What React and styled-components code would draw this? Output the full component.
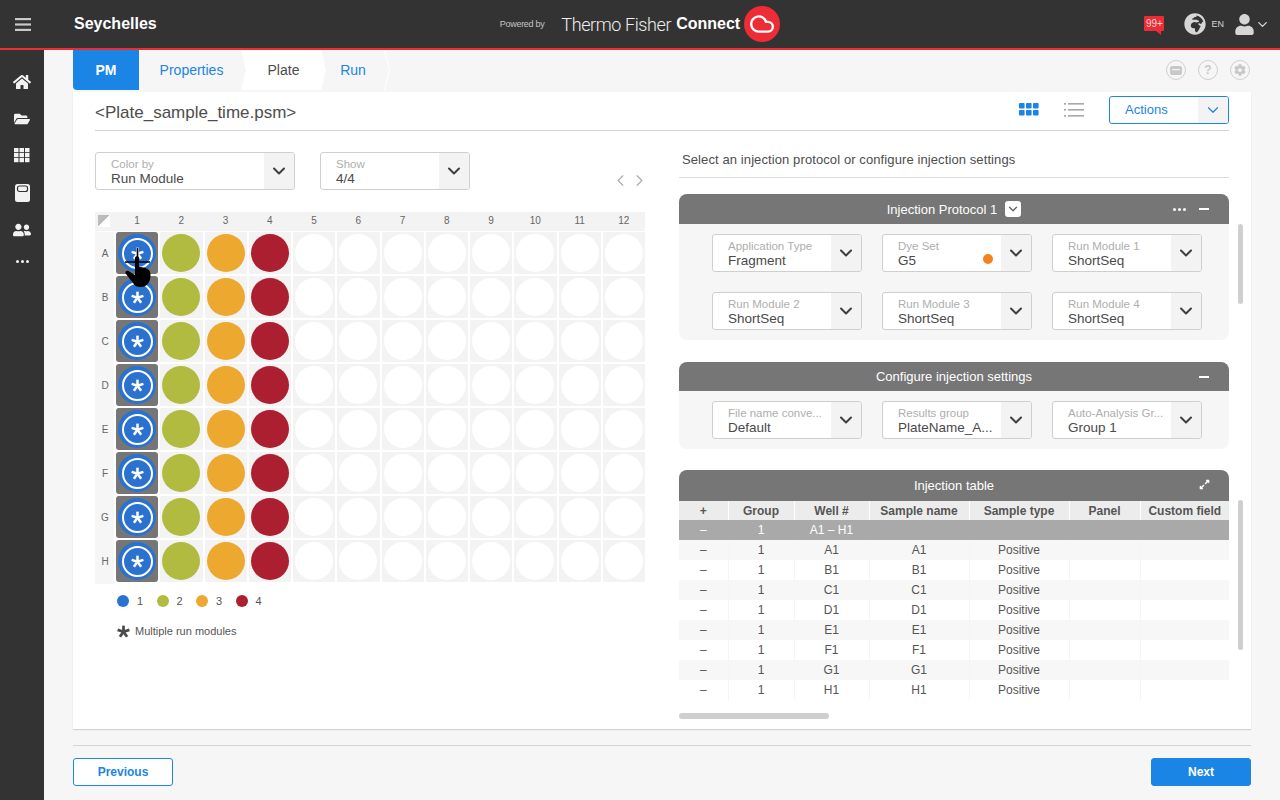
import styled, { createGlobalStyle } from 'styled-components';
import { ChevronDown, ChevronLeft, ChevronRight, Cloud } from 'lucide-react';
import { FaHome, FaFolderOpen, FaUserFriends, FaGlobeAfrica, FaUser, FaCog, FaExpandAlt } from 'react-icons/fa';

const GlobalStyle = createGlobalStyle`
  html, body { margin: 0; padding: 0; }
  body {
    font-family: "Liberation Sans", Arial, sans-serif;
    color: #4a4a4a;
    background: #f6f6f7;
  }
  * { box-sizing: border-box; }
`;

const BLUE = '#1b85e5';

// --- layout ---
const Page = styled.div`
  width: 1280px;
  height: 800px;
  display: flex;
  flex-direction: column;
  overflow: hidden;
`;

const TopBar = styled.header`
  height: 50px;
  flex: none;
  display: grid;
  grid-template-columns: 1fr auto 1fr;
  align-items: center;
  background: #333333;
  border-bottom: 2px solid #ee2c35;
  color: #fff;
`;

const BarLeft = styled.div`
  display: flex;
  align-items: center;
`;

const Burger = styled.div`
  width: 44px;
  margin-right: 30px;
  display: flex;
  justify-content: center;
  color: #c9c9c9;
  margin-left: 1px;
  margin-right: 29px;
`;

const Brand = styled.div`
  font-size: 16px;
  font-weight: 700;
`;

const Logo = styled.div`
  display: flex;
  align-items: center;
`;

const PoweredBy = styled.span`
  font-size: 9px;
  letter-spacing: -0.3px;
  color: #c4c4c4;
  margin-right: 17px;
`;

const LogoName = styled.span`
  font-family: Roboto, sans-serif;
  font-weight: 300;
  font-size: 18px;
  letter-spacing: -0.4px;
  color: #eeeeee;
  margin-right: 5px;
`;

const LogoBold = styled.span`
  font-size: 16px;
  font-weight: 700;
  color: #fff;
  margin-right: 4px;
`;

const CloudBadge = styled.div`
  width: 36px;
  height: 36px;
  border-radius: 50%;
  background: #ee2c35;
  display: flex;
  align-items: center;
  justify-content: center;
`;

const BarRight = styled.div`
  display: flex;
  align-items: center;
  justify-content: flex-end;
  padding-right: 10px;
  color: #d6d6d6;
`;

const AlertBadge = styled.div`
  position: relative;
  width: 20px;
  height: 15px;
  margin-right: 20px;
  margin-top: -2px;
  border-radius: 1px;
  background: #ee2c35;
  color: #f5d5d5;
  font-size: 10px;
  line-height: 15px;
  text-align: center;

  &::after {
    content: '';
    position: absolute;
    right: 3px;
    bottom: -4px;
    border-top: 4px solid #ee2c35;
    border-left: 5px solid transparent;
  }
`;

const Lang = styled.span`
  font-size: 9px;
  margin: 0 10px 0 5px;
`;

const Body = styled.div`
  flex: 1;
  display: flex;
  min-height: 0;
`;

const SideNav = styled.nav`
  width: 44px;
  flex: none;
  padding-top: 13px;
  background: #333333;
  color: #f2f2f2;
`;

const NavItem = styled.div`
  height: 37px;
  display: flex;
  align-items: center;
  justify-content: center;

  &:last-child {
    margin-top: -5px;
  }
`;

const Main = styled.main`
  flex: 1;
  display: flex;
  flex-direction: column;
  padding: 0 29px 14px;
  min-width: 0;
`;

// --- tabs ---
const TabBar = styled.div`
  height: 40px;
  flex: none;
  display: flex;
  justify-content: space-between;
  align-items: center;
  margin-bottom: 2px;
`;

const Tabs = styled.div`
  display: flex;
  height: 100%;
`;

const Tab = styled.div`
  height: 100%;
  width: ${(p) => p.$width}px;
  margin-left: ${(p) => (p.$active ? -3 : 0)}px;
  margin-right: ${(p) => (p.$active ? -4 : 0)}px;
  display: flex;
  align-items: center;
  justify-content: center;
  font-size: 14px;
  color: ${BLUE};
  ${(p) => p.$first && `background: ${BLUE}; color: #fff; font-weight: 700; border-bottom-left-radius: 4px;`}
  ${(p) =>
    p.$active &&
    `background: #fff; color: #4d4d4d;
     clip-path: polygon(0 0, calc(100% - 5px) 0, 100% 50%, calc(100% - 5px) 100%, 0 100%, 5px 50%);`}
`;

const TabEnd = styled.div`
  width: 6px;
  height: 100%;
  background: #fff;
  clip-path: polygon(0 0, 1px 0, 6px 50%, 1px 100%, 0 100%, 5px 50%);
`;

const ToolIcons = styled.div`
  display: flex;
  gap: 12px;
  margin-right: 1px;
`;

const ToolIcon = styled.div`
  width: 20px;
  height: 20px;
  border: 1.5px solid #cfcfcf;
  border-radius: 50%;
  display: flex;
  align-items: center;
  justify-content: center;
  color: #c8c8c8;
  font-size: 12px;
  font-weight: 700;
`;

// --- card ---
const Card = styled.section`
  flex: 1;
  min-height: 0;
  background: #fff;
  padding: 0 22px;
  box-shadow: 0 1px 1px rgba(0, 0, 0, 0.14);
`;

const TitleRow = styled.div`
  height: 39px;
  display: flex;
  align-items: center;
  justify-content: flex-end;
  gap: 25px;
  border-bottom: 1px solid #d4d4d4;
  padding-bottom: 3px;
`;

const FileName = styled.h1`
  margin: 0 auto 0 0;
  font-size: 17px;
  font-weight: 400;
  color: #4d4d4d;
  padding-top: 6px;
`;

const ViewIcon = styled.div`
  display: flex;
`;

const ActionsButton = styled.div`
  width: 120px;
  height: 28px;
  margin-left: 0;
  border: 1px solid ${BLUE};
  border-radius: 3px;
  display: flex;
  align-items: stretch;
  color: ${BLUE};
  font-size: 13px;
  overflow: hidden;
`;

const ActionsLabel = styled.span`
  flex: 1;
  line-height: 26px;
  padding-left: 15px;
`;

const ActionsCaret = styled.span`
  width: 30px;
  background: #f3f3f4;
  display: flex;
  align-items: center;
  justify-content: center;
`;

const Columns = styled.div`
  display: flex;
  justify-content: space-between;
`;

const LeftColumn = styled.div`
  width: 550px;
  padding-top: 21px;
`;

const RightColumn = styled.div`
  position: relative;
  width: 550px;
`;

// --- select ---
const SelectBox = styled.div`
  width: ${(p) => p.$width}px;
  height: 38px;
  flex: none;
  display: flex;
  position: relative;
  background: #fff;
  border: 1px solid #cfcfcf;
  border-radius: 3px;
  overflow: hidden;
`;

const SelectText = styled.div`
  flex: 1;
  min-width: 0;
  padding: 5px 0 0 15px;
`;

const SelectLabel = styled.div`
  font-size: 11.5px;
  line-height: 13px;
  color: #aeaeae;
  white-space: nowrap;
`;

const SelectValue = styled.div`
  font-size: 13.5px;
  line-height: 15px;
  color: #4a4a4a;
  white-space: nowrap;
`;

const SelectCaret = styled.div`
  width: 30px;
  flex: none;
  background: #f3f3f4;
  display: flex;
  align-items: center;
  justify-content: center;
  color: #3f3f3f;
`;

const SelectDot = styled.span`
  position: absolute;
  right: 38px;
  top: 19px;
  width: 10px;
  height: 10px;
  border-radius: 50%;
  background: #f58220;
`;

const Select = ({ label, value, width = 150, dot }) => (
  <SelectBox $width={width}>
    <SelectText>
      <SelectLabel>{label}</SelectLabel>
      <SelectValue>{value}</SelectValue>
    </SelectText>
    {dot && <SelectDot />}
    <SelectCaret>
      <ChevronDown size={20} strokeWidth={2.4} />
    </SelectCaret>
  </SelectBox>
);

// --- plate ---
const PlateControls = styled.div`
  display: flex;
  gap: 25px;
  height: 38px;
  margin-bottom: 22px;
`;

const Pager = styled.div`
  display: flex;
  margin-left: auto;
  margin-right: -4px;
  padding-top: 19px;
  gap: 0;
  color: #a9a9a9;
`;

const Plate = styled.div`
  position: relative;
  display: flex;
  flex-direction: column;
  gap: 2px;
`;

const PlateHead = styled.div`
  display: grid;
  grid-template-columns: 19px repeat(12, 1fr);
  column-gap: 2px;
  height: 19px;
  margin-bottom: -1px;
  background: #f3f3f3;
  font-size: 10px;
  line-height: 18px;
  text-align: center;
  color: #666;
`;

const CornerMark = styled.div`
  margin: 3px 0 0 3px;
  width: 12px;
  height: 12px;
  background: linear-gradient(135deg, #bbbbbb 50%, #fff 50%);
`;

const PlateRow = styled.div`
  display: grid;
  grid-template-columns: 19px repeat(12, 1fr);
  column-gap: 2px;
  height: 42px;
`;

const RowLabel = styled.div`
  background: #f6f6f6;
  margin-bottom: -2px;
  font-size: 10px;
  line-height: 44px;
  padding-left: 1px;
  text-align: center;
  color: #666;
`;

const Well = styled.div`
  background: ${(p) => (p.$selected ? '#767676' : '#f3f3f3')};
  border-radius: ${(p) => (p.$selected ? '3px' : '1px')};
  display: flex;
  align-items: center;
  justify-content: center;
`;

const Spot = styled.div`
  width: 38px;
  height: 38px;
  border-radius: 50%;
  background: ${(p) => p.$color};
  display: flex;
  align-items: center;
  justify-content: center;
`;

const SpotRing = styled.div`
  width: 31px;
  height: 31px;
  border: 2px solid #fff;
  border-radius: 50%;
  display: flex;
  align-items: center;
  justify-content: center;
`;

const TouchCursor = styled.svg`
  position: absolute;
  left: 29px;
  top: 36px;
`;

const Legend = styled.div`
  display: flex;
  align-items: center;
  margin: 12px 0 0 22px;
  height: 14px;
  font-size: 11px;
  color: #555;
`;

const LegendItem = styled.div`
  width: 39.5px;
  display: flex;
  align-items: center;
  gap: 8px;
`;

const LegendDot = styled.span`
  width: 12px;
  height: 12px;
  border-radius: 50%;
  background: ${(p) => p.$color};
`;

const Note = styled.div`
  display: flex;
  align-items: center;
  gap: 5px;
  margin: 16px 0 0 22px;
  height: 14px;
  font-size: 11px;
  color: #555;
`;

// --- right side ---
const RightTitle = styled.div`
  height: 47px;
  margin-bottom: 16px;
  padding: 21px 0 0 3px;
  border-bottom: 1px solid #dcdcdc;
  font-size: 13px;
  line-height: 16px;
  letter-spacing: 0.1px;
  color: #4d4d4d;
`;

const Panel = styled.div`
  background: #f6f6f7;
  border-radius: 8px;
  margin-bottom: ${(p) => p.$gap}px;
  overflow: hidden;
`;

const PanelHead = styled.div`
  height: ${(p) => p.$height || 30}px;
  display: grid;
  grid-template-columns: 1fr auto 1fr;
  align-items: center;
  background: #767676;
  color: #fff;
  font-size: 13px;
`;

const PanelTitle = styled.div`
  display: flex;
  align-items: center;
  gap: 8px;
`;

const TitleCaret = styled.span`
  width: 16px;
  height: 16px;
  border-radius: 3px;
  background: #fff;
  color: #666;
  display: flex;
  align-items: center;
  justify-content: center;
`;

const PanelActions = styled.div`
  grid-column: 3;
  display: flex;
  align-items: center;
  justify-content: flex-end;
  gap: 13px;
  padding-right: 20px;
`;

const DashIcon = styled.span`
  width: 10px;
  height: 2px;
  background: #fff;
`;

const MoreDots = styled.span`
  display: flex;
  gap: 2px;

  i {
    width: 3px;
    height: 3px;
    border-radius: 50%;
    background: ${(p) => p.$color || '#fff'};
  }
`;

const SelectGrid = styled.div`
  display: grid;
  grid-template-columns: repeat(3, 150px);
  gap: 20px;
  row-gap: 20px;
  padding: 10px 27px 10px 33px;
`;

const TableHead = styled.div`
  height: 31px;
  position: relative;
  display: flex;
  align-items: center;
  justify-content: center;
  padding-right: 0;
  background: #767676;
  color: #fff;
  font-size: 13px;
  border-radius: 8px 8px 0 0;
`;

const ExpandIcon = styled.span`
  position: absolute;
  right: 19px;
  top: 9px;
  display: flex;
`;

const Table = styled.table`
  width: 550px;
  table-layout: fixed;
  border-collapse: collapse;
  font-size: 12px;
  color: #555;
  text-align: center;

  th {
    height: 19px;
    padding: 0;
    background: #ececec;
    border-right: 1px solid #fff;
    font-weight: 700;
    color: #555;
  }
  th:last-child,
  td:last-child {
    border-right: 0;
  }
  td {
    height: 20px;
    padding: 0;
    border-right: 1px solid #f5f5f5;
  }
  tbody tr:nth-child(even) td {
    background: #f7f7f7;
  }
  tbody tr:nth-child(odd) td {
    background: #fff;
  }
  tbody tr:first-child td {
    background: #a9a9a9;
    color: #fff;
    border-right-color: #a9a9a9;
  }
`;

const ScrollThumb = styled.div`
  position: absolute;
  right: -14px;
  top: ${(p) => p.$top}px;
  width: 5px;
  height: ${(p) => p.$length}px;
  border-radius: 3px;
  background: #cfcfcf;
`;

const HScrollThumb = styled.div`
  width: 150px;
  height: 6px;
  margin-top: 13px;
  border-radius: 3px;
  background: #cfcfcf;
`;

// --- footer ---
const Footer = styled.footer`
  flex: none;
  margin-top: 16px;
  padding-top: 12px;
  border-top: 1px solid #d4d4d4;
  display: flex;
  justify-content: space-between;
`;

const FooterButton = styled.button`
  width: 100px;
  height: 28px;
  border: 1px solid ${BLUE};
  border-radius: 3px;
  background: ${(p) => (p.$primary ? BLUE : '#fff')};
  color: ${(p) => (p.$primary ? '#fff' : BLUE)};
  font: 700 12px "Liberation Sans", Arial, sans-serif;
`;

// --- drawings ---
const GridGlyph = () => (
  <svg width="16" height="15" viewBox="0 0 16 15" fill="currentColor">
    {[0, 5.5, 11].flatMap((x) =>
      [0, 5, 10].map((y) => <rect key={`${x}-${y}`} x={x} y={y} width="4.5" height="4.2" />)
    )}
  </svg>
);

const InstrumentGlyph = () => (
  <svg width="15" height="18" viewBox="0 0 15 18">
    <rect width="15" height="18" rx="2.5" fill="currentColor" />
    <rect x="2.5" y="2" width="10" height="5.5" rx="2" fill="none" stroke="#333" strokeWidth="1.2" />
  </svg>
);

const MenuGlyph = () => (
  <svg width="16" height="13" viewBox="0 0 16 13" fill="currentColor">
    <rect width="16" height="2.2" y="0" />
    <rect width="16" height="2.2" y="5.4" />
    <rect width="16" height="2.2" y="10.8" />
  </svg>
);

const TilesGlyph = () => (
  <svg width="20" height="13" viewBox="0 0 20 13" fill={BLUE}>
    {[0, 7, 14].flatMap((x) =>
      [0, 7].map((y) => <rect key={`${x}-${y}`} x={x} y={y} width="5.6" height="5.6" rx="0.8" />)
    )}
  </svg>
);

const ListGlyph = () => (
  <svg width="20" height="14" viewBox="0 0 20 14" fill="#a8a8a8">
    {[0, 6, 12].map((y) => (
      <g key={y}>
        <rect x="0" y={y} width="2" height="1.6" />
        <rect x="4" y={y} width="16" height="1.6" />
      </g>
    ))}
  </svg>
);

const StarGlyph = ({ size = 13, color = '#fff', weight = 2.6 }) => (
  <svg width={size} height={size} viewBox="0 0 20 20" stroke={color} strokeWidth={weight * 1.5} strokeLinecap="butt">
    {[0, 72, 144, 216, 288].map((a) => (
      <line key={a} x1="10" y1="10.5" x2="10" y2="1" transform={`rotate(${a} 10 10.5)`} />
    ))}
  </svg>
);

const TrayGlyph = () => (
  <svg width="12" height="9" viewBox="0 0 12 9" fill="#c8c8c8">
    <rect width="12" height="9" rx="2" />
    <rect x="2" y="3" width="8" height="1.2" fill="#f6f6f7" />
  </svg>
);

// --- data ---
const WELL_COLORS = ['#2b72d0', '#b1bb3f', '#eca82f', '#ac1f31'];
const ROWS = ['A', 'B', 'C', 'D', 'E', 'F', 'G', 'H'];
const COLS = [1, 2, 3, 4, 5, 6, 7, 8, 9, 10, 11, 12];
const COL_WIDTHS = [49, 66, 75, 100, 100, 71, 89];
const TABLE_HEADERS = ['+', 'Group', 'Well #', 'Sample name', 'Sample type', 'Panel', 'Custom field'];

const PROTOCOL_FIELDS = [
  { label: 'Application Type', value: 'Fragment' },
  { label: 'Dye Set', value: 'G5', dot: true },
  { label: 'Run Module 1', value: 'ShortSeq' },
  { label: 'Run Module 2', value: 'ShortSeq' },
  { label: 'Run Module 3', value: 'ShortSeq' },
  { label: 'Run Module 4', value: 'ShortSeq' },
];

const SETTING_FIELDS = [
  { label: 'File name conve...', value: 'Default' },
  { label: 'Results group', value: 'PlateName_A...' },
  { label: 'Auto-Analysis Gr...', value: 'Group 1' },
];

const WellCell = ({ col }) => {
  const color = WELL_COLORS[col - 1];
  if (col === 1) {
    return (
      <Well $selected>
        <Spot $color={color}>
          <SpotRing>
            <StarGlyph size={13} />
          </SpotRing>
        </Spot>
      </Well>
    );
  }
  return (
    <Well>
      <Spot $color={color || '#fff'} />
    </Well>
  );
};

export default function App() {
  return (
    <Page>
      <GlobalStyle />
      <TopBar>
        <BarLeft>
          <Burger>
            <MenuGlyph />
          </Burger>
          <Brand>Seychelles</Brand>
        </BarLeft>
        <Logo>
          <PoweredBy>Powered by</PoweredBy>
          <LogoName>Thermo Fisher</LogoName>
          <LogoBold>Connect</LogoBold>
          <CloudBadge>
            <Cloud size={26} color="#fff" strokeWidth={2.2} />
          </CloudBadge>
        </Logo>
        <BarRight>
          <AlertBadge>99+</AlertBadge>
          <FaGlobeAfrica size={22} />
          <Lang>EN</Lang>
          <FaUser size={21} />
          <ChevronDown size={15} strokeWidth={2.2} />
        </BarRight>
      </TopBar>

      <Body>
        <SideNav>
          <NavItem><FaHome size={18} /></NavItem>
          <NavItem><FaFolderOpen size={16} /></NavItem>
          <NavItem><GridGlyph /></NavItem>
          <NavItem><InstrumentGlyph /></NavItem>
          <NavItem><FaUserFriends size={18} /></NavItem>
          <NavItem>
            <MoreDots $color="#f2f2f2"><i /><i /><i /></MoreDots>
          </NavItem>
        </SideNav>

        <Main>
          <TabBar>
            <Tabs>
              <Tab $first $width={66}>PM</Tab>
              <Tab $width={105}>Properties</Tab>
              <Tab $active $width={85}>Plate</Tab>
              <Tab $width={62}>Run</Tab>
              <TabEnd />
            </Tabs>
            <ToolIcons>
              <ToolIcon><TrayGlyph /></ToolIcon>
              <ToolIcon>?</ToolIcon>
              <ToolIcon><FaCog size={12} /></ToolIcon>
            </ToolIcons>
          </TabBar>

          <Card>
            <TitleRow>
              <FileName>&lt;Plate_sample_time.psm&gt;</FileName>
              <ViewIcon><TilesGlyph /></ViewIcon>
              <ViewIcon><ListGlyph /></ViewIcon>
              <ActionsButton>
                <ActionsLabel>Actions</ActionsLabel>
                <ActionsCaret><ChevronDown size={18} strokeWidth={1.6} /></ActionsCaret>
              </ActionsButton>
            </TitleRow>

            <Columns>
              <LeftColumn>
                <PlateControls>
                  <Select label="Color by" value="Run Module" width={200} />
                  <Select label="Show" value="4/4" />
                  <Pager>
                    <ChevronLeft size={19} strokeWidth={1.4} />
                    <ChevronRight size={19} strokeWidth={1.4} />
                  </Pager>
                </PlateControls>

                <Plate>
                  <PlateHead>
                    <CornerMark />
                    {COLS.map((c) => <span key={c}>{c}</span>)}
                  </PlateHead>
                  {ROWS.map((r) => (
                    <PlateRow key={r}>
                      <RowLabel>{r}</RowLabel>
                      {COLS.map((c) => <WellCell key={c} col={c} />)}
                    </PlateRow>
                  ))}
                  <TouchCursor width="28" height="42" viewBox="0 0 28 42">
                    <path d="M1 14H26M13.5 0V12" stroke="#000" strokeWidth="1.6" fill="none" />
                    <path
                      fill="#000"
                      d="M11 10c0-2.2 4-2.2 4 0v9c4 0 8 1 10 3 2 2 2 8 0 12-2 4-5 5-9 5-3 0-5-1-7-4l-7-9c-1.500-2 .5-4 2.500-3l6.500 4z"
                    />
                  </TouchCursor>
                </Plate>

                <Legend>
                  {WELL_COLORS.map((color, i) => (
                    <LegendItem key={color}>
                      <LegendDot $color={color} />
                      {i + 1}
                    </LegendItem>
                  ))}
                </Legend>
                <Note>
                  <StarGlyph size={13} color="#4a4a4a" weight={2.8} />
                  Multiple run modules
                </Note>
              </LeftColumn>

              <RightColumn>
                <RightTitle>Select an injection protocol or configure injection settings</RightTitle>

                <Panel $gap={22}>
                  <PanelHead>
                    <span />
                    <PanelTitle>
                      Injection Protocol 1
                      <TitleCaret><ChevronDown size={14} strokeWidth={2.4} /></TitleCaret>
                    </PanelTitle>
                    <PanelActions>
                      <MoreDots><i /><i /><i /></MoreDots>
                      <DashIcon />
                    </PanelActions>
                  </PanelHead>
                  <SelectGrid>
                    {PROTOCOL_FIELDS.map((f) => <Select key={f.label} {...f} />)}
                  </SelectGrid>
                </Panel>

                <Panel $gap={21}>
                  <PanelHead $height={29}>
                    <span />
                    <PanelTitle>Configure injection settings</PanelTitle>
                    <PanelActions><DashIcon /></PanelActions>
                  </PanelHead>
                  <SelectGrid>
                    {SETTING_FIELDS.map((f) => <Select key={f.label} {...f} />)}
                  </SelectGrid>
                </Panel>

                <TableHead>
                  Injection table
                  <ExpandIcon><FaExpandAlt size={11} /></ExpandIcon>
                </TableHead>
                <Table>
                  <colgroup>
                    {COL_WIDTHS.map((w, i) => <col key={i} width={w} />)}
                  </colgroup>
                  <thead>
                    <tr>{TABLE_HEADERS.map((h) => <th key={h}>{h}</th>)}</tr>
                  </thead>
                  <tbody>
                    <tr>
                      <td>–</td><td>1</td><td>A1 – H1</td><td /><td /><td /><td />
                    </tr>
                    {ROWS.map((r) => (
                      <tr key={r}>
                        <td>–</td>
                        <td>1</td>
                        <td>{r}1</td>
                        <td>{r}1</td>
                        <td>Positive</td>
                        <td />
                        <td />
                      </tr>
                    ))}
                  </tbody>
                </Table>
                <HScrollThumb />
                <ScrollThumb $top={93} $length={80} />
                <ScrollThumb $top={369} $length={150} />
              </RightColumn>
            </Columns>
          </Card>

          <Footer>
            <FooterButton>Previous</FooterButton>
            <FooterButton $primary>Next</FooterButton>
          </Footer>
        </Main>
      </Body>
    </Page>
  );
}
